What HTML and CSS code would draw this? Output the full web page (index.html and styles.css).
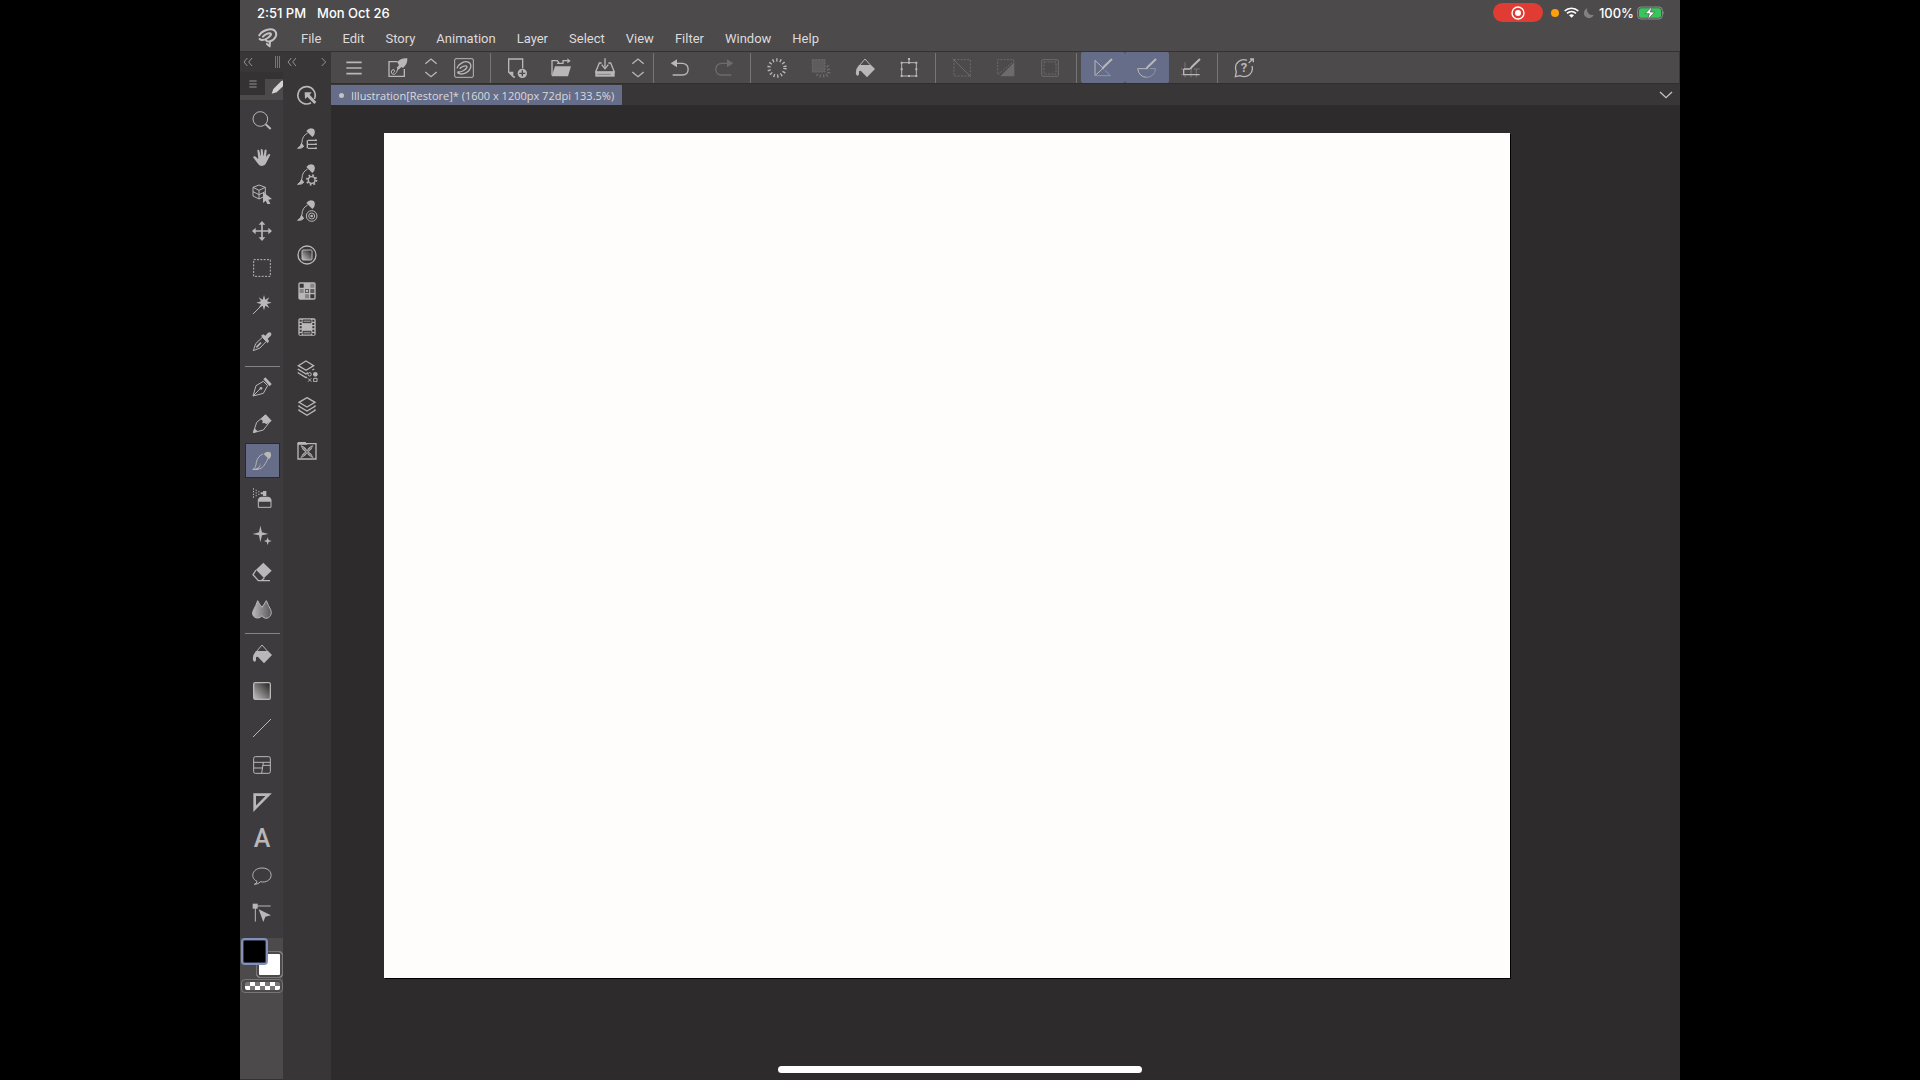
FILE: index.html
```html
<!DOCTYPE html>
<html lang="en">
<head>
  <meta charset="utf-8">
  <meta name="viewport" content="width=device-width, initial-scale=1">
  <title>Illustration[Restore]*</title>
  <link rel="stylesheet" href="styles.css">
</head>
<body>
  <div class="tablet">
    <header>
      <div class="status">
        <span>2:51 PM</span>
        <span>Mon Oct 26</span>
        <div class="status-right">
          <button type="button" class="record" aria-label="Recording">
            <svg viewBox="0 0 42 42" width="14" height="14"><circle cx="21" cy="21" r="18" fill="none" stroke="#fff" stroke-width="4"/><circle cx="21" cy="21" r="9" fill="#fff"/></svg>
          </button>
          <span class="mic-dot"></span>
          <svg viewBox="0 0 45 33" width="15" height="11" fill="none" stroke="#fff" stroke-width="5"><path d="M2 12C13 1 32 1 43 12M9 19c8-7 19-7 27 0"/><path d="M15 25c5-4 10-4 15 0l-7 7z" fill="#fff" stroke="none"/></svg>
          <svg class="moon" viewBox="0 0 30 30" width="10" height="10"><path d="M10 1A15 15 0 1 0 29 20A15 15 0 0 1 10 1z" fill="#828082"/></svg>
          <span class="percent">100%</span>
          <svg viewBox="0 0 84 42" width="28" height="14"><rect x="2" y="3" width="74" height="36" rx="10" fill="none" stroke="#8d8c8d" stroke-width="3"/><rect x="6" y="7" width="66" height="28" rx="6" fill="#35c759"/><path d="M79 15q5 5 0 11z" fill="#8d8c8d"/><path d="M45 1L24 23h13l-5 18 21-23H40z" fill="#fff" stroke="#4c4a4b" stroke-width="2"/></svg>
        </div>
      </div>
      <nav class="menu">
        <button type="button" class="logo" aria-label="Clip Studio">
          <svg viewBox="0 0 60 60" width="20" height="20" fill="none" stroke="#c4c2c3" stroke-width="6" stroke-linecap="round" stroke-linejoin="round"><path d="M4 22C12 7 38-1 49 7c12 11 3 29-13 33-8 2-13-1-12-6M5 33c6 6 16 2 24-3 8-6 13-12 8-14-7-2-18 5-22 10M36 40l-1 15-8-7"/></svg>
        </button>
        <button type="button">File</button>
        <button type="button">Edit</button>
        <button type="button">Story</button>
        <button type="button">Animation</button>
        <button type="button">Layer</button>
        <button type="button">Select</button>
        <button type="button">View</button>
        <button type="button">Filter</button>
        <button type="button">Window</button>
        <button type="button">Help</button>
      </nav>
    </header>

    <div class="app">
      <aside class="tools">
        <div class="dock-bar">
          <button type="button" aria-label="Collapse"><svg viewBox="0 0 30 30" width="10" height="10"><path d="M13 3L3 15l10 12M27 3L17 15l10 12"/></svg></button>
          <span class="grip"></span>
        </div>
        <div class="tool-tabs">
          <button type="button" class="tab-menu" aria-label="Palette menu"><svg viewBox="0 0 24 24" width="8" height="8"><path d="M1 3h22M1 12h22M1 21h22"/></svg></button>
          <button type="button" class="tab-tool" aria-label="Tool">
            <svg viewBox="0 0 36 42" width="12" height="14"><path d="M2 41l5-14L31 3l8-3v16L17 37z" fill="#d4d2d3"/></svg>
          </button>
        </div>

        <div class="tool-list">
          <button type="button" aria-label="Zoom"><svg viewBox="0 0 60 60"><circle cx="25" cy="27" r="22"/><path d="M41 43l15 14" stroke-width="6"/></svg></button>
          <button type="button" aria-label="Hand"><svg viewBox="0 0 60 60"><path class="solid" d="M16 9q4-2 6 2l4 15h1l-1-18q3-4 6 0l2 18h1l3-17q4-3 6 1l-2 20 7-8q5-2 6 1L42 49q-3 8-12 8-8 0-12-7L4 32q-1-5 5-4l10 8z"/></svg></button>
          <button type="button" aria-label="Object"><svg viewBox="0 0 60 60"><path d="M21 3L40 10v26L21 45 3 36V10zM3 10l18 9 19-9M21 19v26M3 23l18 9 19-9"/><path class="solid" d="M33 24l27 21-11 2 6 12-8 3-6-12-8 7z" stroke="#3d3b3e" stroke-width="2"/></svg></button>
          <button type="button" aria-label="Move layer"><svg viewBox="0 0 60 60"><path d="M30 6v48M6 30h48" stroke-width="5"/><path class="solid" d="M30 0l10 11H20zM30 60l10-11H20zM0 30l11-10v20zM60 30L49 20v20z"/></svg></button>
          <button type="button" aria-label="Selection area"><svg viewBox="0 0 60 60"><rect x="5" y="5" width="50" height="50" stroke-dasharray="6 4"/></svg></button>
          <button type="button" aria-label="Auto select"><svg viewBox="0 0 60 60"><path d="M3 57l26-26"/><path class="solid" d="M36 0l4 14 12-7-7 12 14 4-14 4 7 12-12-7-4 14-4-14-12 7 7-12-14-4 14-4-7-12 12 7z"/></svg></button>
          <button type="button" aria-label="Eyedropper"><svg viewBox="0 0 60 60"><path d="M4 56l7-21 20-19 12 12-19 20z"/><path d="M13 46l14-14" stroke-width="5"/><path class="solid" d="M27 11l7-4 6 4 8-9q7-3 10 3 1 5-3 8l-8 7 4 7-4 7z"/></svg></button>
          <hr>
          <button type="button" aria-label="Pen"><svg viewBox="0 0 60 60"><path d="M3 57l9-31 22-13 13 13-13 23zM4 56l22-22"/><circle class="solid" cx="27" cy="34" r="4"/><path class="solid" d="M34 7l6-6 19 20-6 7z"/></svg></button>
          <button type="button" aria-label="Pencil"><svg viewBox="0 0 60 60"><path d="M4 56l10-31 25-21 17 16-22 28z"/><path class="solid" d="M41 1l18 19-16 11-5-4-7 1 1-8-6-4zM3 57l4-15 10 10z"/></svg></button>
          <button type="button" class="active" aria-label="Brush" aria-pressed="true"><svg viewBox="0 0 60 60"><path d="M33 9C20 14 13 26 12 41 10 49 7 53 2 55c16 3 29-3 35-13 4-7 9-12 10-20"/><path class="solid" d="M35 9q9-10 20-5 6 13-4 21zM3 55l15-5q7-5 10-17-4 20-14 24z"/></svg></button>
          <button type="button" aria-label="Airbrush"><svg viewBox="0 0 60 60"><path d="M3 3h3M3 11h3M3 19h3M3 27h3M11 7h3M11 15h3M11 23h3M19 11h3M19 19h3" stroke-width="4"/><path class="solid" d="M33 9h10v15H33zM26 13h7v6h-7zM17 41q0-15 13-15h16q13 0 13 15z"/><path d="M19 41v17h38V41"/></svg></button>
          <button type="button" aria-label="Decoration"><svg viewBox="0 0 60 60"><path class="solid" d="M25 2l5 20 19 5-19 4-5 21-4-21-19-4 19-5zM47 37l3 8 9 3-9 3-3 9-3-9-8-3 8-3z"/></svg></button>
          <button type="button" aria-label="Eraser"><svg viewBox="0 0 60 60"><path class="solid" d="M34 2l25 24-23 22-24-25z"/><path d="M12 24L3 38l16 18h9l9-8M22 56h32" stroke-width="4"/></svg></button>
          <button type="button" aria-label="Blend"><svg viewBox="0 0 60 60"><defs><linearGradient id="drop"><stop offset="0" stop-color="#b9b7b8"/><stop offset="1" stop-color="#5a585a"/></linearGradient></defs><path d="M17 5q6 12 13 20Q37 15 43 5q6 15 13 27c7 17-8 31-20 24q-6-3-6-6-4 8-14 7C3 56-1 45 4 34q8-14 13-29z" fill="url(#drop)"/></svg></button>
          <hr>
          <button type="button" aria-label="Fill"><svg viewBox="0 0 60 60"><path d="M14 22L30 3l16 18"/><path class="solid" d="M12 21h36l12 12-24 25-18-19q-5-2-6 2v8q-2 7-8 2-5-15 8-30z"/></svg></button>
          <button type="button" aria-label="Gradient"><svg viewBox="0 0 60 60"><defs><linearGradient id="grad" x1="0" y1="1" x2="1" y2="0"><stop offset="0" stop-color="#c4c2c3"/><stop offset="1" stop-color="#201e1f"/></linearGradient></defs><rect x="5" y="5" width="50" height="50" rx="5" fill="url(#grad)" stroke-width="4"/></svg></button>
          <button type="button" aria-label="Figure"><svg viewBox="0 0 60 60"><path d="M3 57L57 3"/></svg></button>
          <button type="button" aria-label="Frame border"><svg viewBox="0 0 60 60"><rect x="5" y="5" width="50" height="50" rx="5"/><path d="M5 22h50M34 22l-5 33M5 39h27M33 31h22"/></svg></button>
          <button type="button" aria-label="Ruler"><svg viewBox="0 0 60 60"><path d="M8 8h42L8 50z" stroke-width="8"/></svg></button>
          <button type="button" class="text-tool" aria-label="Text">A</button>
          <button type="button" aria-label="Balloon"><svg viewBox="0 0 60 60"><path d="M15 46C-8 35 2 6 30 6c36 0 36 42 2 42l-6-1q-7 8-19 8 8-2 8-9z"/></svg></button>
          <button type="button" aria-label="Correct line"><svg viewBox="0 0 60 60"><path class="solid" d="M2 2h15v15H2z"/><path d="M15 9h41M10 15v41"/><path class="solid" d="M20 19l37 18-17 4-6 16z"/></svg></button>
        </div>

        <div class="colors">
          <div class="swatches">
            <button type="button" class="sub-color" aria-label="Sub color"></button>
            <button type="button" class="main-color" aria-label="Main color"></button>
          </div>
          <button type="button" class="transparent" aria-label="Transparent"><span></span></button>
        </div>
      </aside>

      <aside class="palettes">
        <div class="dock-bar">
          <button type="button" aria-label="Collapse"><svg viewBox="0 0 30 30" width="10" height="10"><path d="M13 3L3 15l10 12M27 3L17 15l10 12"/></svg></button>
          <button type="button" aria-label="Expand"><svg viewBox="0 0 30 30" width="10" height="10"><path d="M14 3l12 12-12 12"/></svg></button>
        </div>
        <div class="palette-list">
          <div>
            <button type="button" aria-label="Quick access"><svg viewBox="0 0 60 60"><path d="M52 42A26 26 0 1 0 42 53" stroke-width="5"/><path class="solid" d="M23 22h21l-6 7 20 22-6 6-21-21-7 6z"/></svg></button>
          </div>
          <div>
            <button type="button" aria-label="Sub tool"><svg viewBox="0 0 66 66" class="wide"><path d="M35 15Q18 24 18 43q-3 12-13 18 15 1 19-7"/><path class="solid" d="M31 9q10-13 23-5 7 13-5 23zM3 61q13-4 13-18l7 10q-5 9-20 8z"/><path d="M36 37h24M36 49h24M36 61h24M34 37v24" stroke-width="4"/><circle class="solid" cx="60" cy="37" r="3"/><circle class="solid" cx="60" cy="49" r="3"/><circle class="solid" cx="60" cy="61" r="3"/></svg></button>
            <button type="button" aria-label="Tool property"><svg viewBox="0 0 66 66" class="wide"><path d="M35 15Q18 24 18 43q-3 12-13 18 15 1 19-7"/><path class="solid" d="M31 9q10-13 23-5 7 13-5 23zM3 61q13-4 13-18l7 10q-5 9-20 8z"/><circle cx="47" cy="48" r="10" stroke-width="4"/><circle cx="47" cy="48" r="14" stroke-width="6" stroke-dasharray="5 6"/></svg></button>
            <button type="button" aria-label="Brush size"><svg viewBox="0 0 66 66" class="wide"><path d="M35 15Q18 24 18 43q-3 12-13 18 15 1 19-7"/><path class="solid" d="M31 9q10-13 23-5 7 13-5 23zM3 61q13-4 13-18l7 10q-5 9-20 8z"/><circle cx="47" cy="48" r="16" fill="#383637"/><circle cx="47" cy="48" r="9"/><circle class="solid" cx="47" cy="48" r="4"/></svg></button>
          </div>
          <div>
            <button type="button" aria-label="Color wheel"><svg viewBox="0 0 60 60"><circle cx="30" cy="30" r="27" stroke-width="4"/><rect x="15" y="15" width="30" height="30" rx="3" fill="url(#grad)"/></svg></button>
            <button type="button" aria-label="Color set"><svg viewBox="0 0 60 60"><rect class="solid" x="4" y="4" width="52" height="52" rx="5"/><path d="M8 8h12v12H8zM40 40h12v12H40z" fill="#383637" stroke="none"/><path d="M40 8h12v12H40zM8 24h12v12H8zM24 40h12v12H24z" fill="#858384" stroke="none"/><path d="M24 24h12v12H24zM40 24h12v12H40z" fill="#5c5a5b" stroke="none"/><path class="solid" d="M27 27h6v6h-6z"/></svg></button>
            <button type="button" aria-label="Timeline"><svg viewBox="0 0 60 60"><rect class="solid" x="4" y="4" width="52" height="52" rx="5"/><path d="M11 8v46M49 8v46" stroke="#383637" stroke-width="6" stroke-dasharray="6 4"/><path d="M18 9h24v8H18zM18 43h24v8H18z" fill="#858384" stroke="#383637"/></svg></button>
          </div>
          <div>
            <button type="button" aria-label="Layer property"><svg viewBox="0 0 66 66" class="wide"><path d="M30 3l23 14-23 14L7 17zM7 26v2l23 14 6-4M53 26v2l-4 2M7 37v2l23 14 3-2" stroke-width="4"/><circle cx="41" cy="43" r="5"/><circle class="solid" cx="58" cy="43" r="7"/><path d="M36 55l10 10M46 55L36 65M53 55h10v10H53z"/></svg></button>
            <button type="button" aria-label="Layer"><svg viewBox="0 0 60 60"><path d="M30 2l24 14-24 14L6 16zM6 25v3l24 14 24-14v-3M6 37v3l24 15 24-15v-3" stroke-width="4"/></svg></button>
          </div>
          <div>
            <button type="button" aria-label="Material"><svg viewBox="0 0 60 60"><path d="M3 8h54v46H3z" stroke-width="4"/><path class="solid" d="M2 3h24l5 8H2z"/><path class="solid" d="M11 13q14 4 19 15 5-11 19-15-3 12-14 19 11 6 15 19-15-4-20-15-5 11-20 15 4-13 15-19-10-5-14-19z"/><path d="M15 17l30 30M45 17L15 47" stroke="#383637" stroke-width="2"/></svg></button>
          </div>
        </div>
      </aside>

      <main>
        <div class="command-bar">
          <button type="button" aria-label="Menu"><svg viewBox="0 0 60 60"><path d="M7 13h46M7 30h46M7 47h46" stroke-width="5"/></svg></button>
          <button type="button" aria-label="Brush settings"><svg viewBox="0 0 60 60"><path d="M29 11H3v44h46V33" stroke-width="4"/><path class="solid" d="M28 13q10-14 30-12 1 18-13 29l-5-3-8 8-6-6 7-7z"/><path d="M31 27q-4 20-12 22-9 1-9-7 0-8 8-7 5 5-2 9"/></svg></button>
          <button type="button" class="arrows" aria-label="Switch brush"><svg viewBox="0 0 60 60"><path d="M13 17L30 3l17 14M13 42l17 14 17-14" stroke-width="4"/></svg></button>
          <button type="button" aria-label="Clip Studio"><svg viewBox="0 0 60 60"><rect x="2" y="2" width="56" height="56" rx="4"/><path d="M9 31C13 17 33 7 44 13c12 7 6 24-7 31-11 6-26 5-26-3M11 41c4 2 9 1 15-2 9-5 17-12 11-15-6-2-16 4-20 8" stroke-width="4"/></svg></button>
          <span class="sep"></span>
          <button type="button" aria-label="New"><svg viewBox="0 0 60 60"><path d="M24 57h-4L5 43V3h42v28" stroke-width="4"/><path class="solid" d="M5 41h14v15z"/><circle class="solid" cx="46" cy="46" r="14"/><path d="M46 37v18M37 46h18" stroke="#4c4a4b" stroke-width="4"/></svg></button>
          <button type="button" aria-label="Open"><svg viewBox="0 0 60 60"><path d="M3 52V8h16l6 8h9M25 16h-7M36 18V8h14" stroke-width="4"/><path class="solid" d="M49 1l10 8-10 7zM12 25h48l-9 30H2z"/></svg></button>
          <button type="button" aria-label="Save"><svg viewBox="0 0 60 60"><path d="M20 15H13L2 42h56L47 15h-7M30 1v25M20 20l10 12 10-12" stroke-width="4"/><path class="solid" d="M1 41h58v15H1z"/><path d="M7 49h40" stroke="#858384"/></svg></button>
          <button type="button" class="arrows" aria-label="Save options"><svg viewBox="0 0 60 60"><path d="M13 17L30 3l17 14M13 42l17 14 17-14" stroke-width="4"/></svg></button>
          <span class="sep"></span>
          <button type="button" aria-label="Undo"><svg viewBox="0 0 60 60"><path d="M14 16h24c22 3 22 34-1 35H8" stroke-width="4"/><path class="solid" d="M2 16L21 4v24z"/></svg></button>
          <button type="button" disabled aria-label="Redo"><svg viewBox="0 0 60 60"><path d="M46 16H22C0 19 0 50 23 51h29" stroke-width="4"/><path class="solid" d="M58 16L39 4v24z"/></svg></button>
          <span class="sep"></span>
          <button type="button" aria-label="Clear"><svg viewBox="0 0 60 60"><circle cx="30" cy="30" r="24" stroke-width="10" stroke-dasharray="4 7"/></svg></button>
          <button type="button" disabled aria-label="Clear outside selection"><svg viewBox="0 0 60 60"><rect x="4" y="5" width="38" height="37" fill="#8a8889" stroke-dasharray="6 3"/><path d="M48 36l9-3M48 43l10 2M44 48l7 8M37 49l2 10M29 49l-2 9M21 48l-5 5M47 28l6-6" stroke-width="4"/></svg></button>
          <button type="button" aria-label="Fill"><svg viewBox="0 0 60 60"><path d="M14 22L30 3l16 18"/><path class="solid" d="M12 21h36l12 12-24 25-18-19q-5-2-6 2v8q-2 7-8 2-5-15 8-30z"/></svg></button>
          <button type="button" aria-label="Scale and rotate"><svg viewBox="0 0 60 60"><path d="M8 14h44v40H8zM30 1v13"/><path d="M5 14h6M49 14h6M5 54h6M49 54h6M27 3h6M27 14h6M27 54h6M5 34h6M49 34h6" stroke-width="6"/></svg></button>
          <span class="sep"></span>
          <button type="button" disabled aria-label="Deselect"><svg viewBox="0 0 60 60"><rect x="6" y="5" width="49" height="49" stroke-dasharray="6 4"/><path d="M2 2l55 55"/></svg></button>
          <button type="button" disabled aria-label="Invert selection"><svg viewBox="0 0 60 60"><path d="M5 47V5h48v7M6 50L52 10" stroke-dasharray="6 4"/><path class="solid" d="M55 12v43H13z"/></svg></button>
          <button type="button" disabled aria-label="Show selection border"><svg viewBox="0 0 60 60"><rect x="5" y="5" width="50" height="50" rx="4"/><rect x="12" y="12" width="36" height="36" stroke-dasharray="6 4"/></svg></button>
          <span class="sep"></span>
          <button type="button" class="active" aria-label="Snap to ruler" aria-pressed="true"><svg viewBox="0 0 60 60"><path d="M30 30L6 7v46l24-22"/><path d="M6 53h46L36 37" stroke="#9096a8"/><path d="M28 33l5-7L57 3" stroke-width="6"/></svg></button>
          <button type="button" class="active" aria-label="Snap to special ruler" aria-pressed="true"><svg viewBox="0 0 60 60"><path d="M28 32H2q4 25 27 26" stroke-width="3"/><path d="M29 58q23-1 27-26H39" stroke="#9096a8"/><path d="M28 33l5-7L57 3" stroke-width="6"/></svg></button>
          <button type="button" aria-label="Snap to grid"><svg viewBox="0 0 60 60"><path d="M0 33h26M0 50h8M12 13v20M30 33v25M46 33v25M38 33h18M12 50v8" stroke="#777576"/><path d="M8 33v17h48M9 33h18" stroke-width="4"/><path d="M28 33l5-7L57 3" stroke-width="6"/></svg></button>
          <span class="sep"></span>
          <button type="button" class="help" aria-label="Support"><svg viewBox="0 0 60 60"><path d="M39 7C20 0 2 15 5 34l2 8-3 14 14-3c22 10 42-8 36-29M44 15L56 4M48 3h10v10" stroke-width="4"/></svg><span>?</span></button>
        </div>
        <div class="tab-bar">
          <button type="button" class="doc-tab"><span class="unsaved"></span>Illustration[Restore]* (1600 x 1200px 72dpi 133.5%)</button>
          <button type="button" class="tab-more" aria-label="More tabs"><svg viewBox="0 0 42 24" width="14" height="8"><path d="M3 3l18 17L39 3" fill="none" stroke="#c4c2c3" stroke-width="4"/></svg></button>
        </div>
        <div class="workspace">
          <canvas></canvas>
        </div>
      </main>
    </div>
    <div class="home"></div>
  </div>
</body>
</html>
```

FILE: styles.css
```css
* {
  box-sizing: border-box;
}
body {
  margin: 0;
  background: #000;
  font-family: Roboto, "Liberation Sans", sans-serif;
}
button {
  display: flex;
  align-items: center;
  justify-content: center;
  margin: 0;
  padding: 0;
  border: none;
  background: none;
  color: #dcdadb;
  font: inherit;
  cursor: pointer;
}
svg {
  display: block;
  flex: none;
}

/* 4:3 tablet screen */
.tablet {
  position: relative;
  display: flex;
  flex-direction: column;
  height: 100vh;
  aspect-ratio: 4 / 3;
  margin: 0 auto;
  background: #2d2b2c;
  overflow: hidden;
}
header {
  background: #4c4a4b;
  border-bottom: 1px solid #343233;
}
.status {
  display: flex;
  align-items: center;
  gap: 11px;
  height: 25px;
  padding: 0 15px 0 17px;
  color: #fff;
  font-family: Inter, sans-serif;
  font-size: 13px;
  font-weight: 500;
}
.status-right {
  display: flex;
  align-items: center;
  gap: 5px;
  margin-left: auto;
}
.record {
  width: 50px;
  height: 19px;
  margin-right: 3px;
  border-radius: 10px;
  background: #e03c33;
}
.mic-dot {
  width: 8px;
  height: 8px;
  border-radius: 50%;
  background: #ff9f0a;
}
.percent {
  margin: 0 -2px 0 0;
}
.menu {
  display: flex;
  gap: 1px;
  height: 26px;
  font-size: 13px;
}
.menu button {
  padding: 0 10px;
}
.menu .logo {
  padding: 0 12px 0 18px;
}

.app {
  display: flex;
  flex: 1;
  min-height: 0;
}
.dock-bar {
  display: flex;
  align-items: center;
  justify-content: space-between;
  height: 20px;
  padding: 0 3px;
}
.dock-bar svg,
.tab-menu svg {
  fill: none;
  stroke: #949293;
  stroke-width: 3;
}
.grip {
  width: 5px;
  height: 12px;
  border: 1px solid #777576;
  border-width: 0 1px;
  background: linear-gradient(90deg, transparent 1px, #777576 1px, #777576 2px, transparent 2px);
}

/* tool and palette icons */
.tool-list svg,
.palette-list svg,
.command-bar svg {
  width: 20px;
  height: 20px;
  fill: none;
  stroke: #b9b7b8;
  stroke-width: 3;
}
.palette-list .wide {
  width: 22px;
  height: 22px;
}
.solid {
  fill: #b9b7b8;
  stroke: none;
}

.tools {
  display: flex;
  flex-direction: column;
  width: 43px;
  background: #3d3b3e;
}
.tools .dock-bar,
.palettes .dock-bar {
  background: #383637;
}
.tool-tabs {
  display: flex;
  align-items: stretch;
  height: 28px;
  border-bottom: 5px solid #4c4a4b;
  background: #343233;
}
.tab-menu {
  width: 25px;
}
.tab-tool {
  flex: 1;
  margin-top: 7px;
  background: #4c4a4b;
  justify-content: flex-end;
}
.tool-list {
  display: flex;
  flex-direction: column;
  align-items: center;
  padding: 1px 0 7px 1px;
}
.tool-list button {
  width: 35px;
  height: 35px;
  margin: 1px 0;
}
.tool-list hr {
  width: 35px;
  height: 1px;
  margin: 6px 0 1px;
  border: none;
  background: #858384;
}
.tool-list .active {
  border: 1px solid #252a39;
  background: #656d88;
}
.text-tool {
  color: #b9b7b8;
  font-size: 25px;
  font-weight: 500;
}

.colors {
  flex: 1;
  padding: 0 0 0 1px;
  border-bottom: 1px solid #343233;
  background: #4c4a4b;
}
.swatches {
  position: relative;
  height: 41px;
}
.main-color,
.sub-color {
  position: absolute;
  width: 27px;
  height: 27px;
  border-radius: 4px;
}
.main-color {
  top: 0;
  left: 0;
  border: 2px solid #8290ba;
  background: #000;
  box-shadow: inset 0 0 0 1px #343c55;
}
.sub-color {
  right: 0;
  bottom: 1px;
  border: 1px solid #777576;
  background: #fff;
  box-shadow: inset 0 0 0 2px #4c4a4b;
}
.transparent {
  width: 100%;
  height: 14px;
  border: 1px solid #777576;
  border-radius: 4px;
}
.transparent span {
  width: 35px;
  height: 8px;
  border-radius: 2px;
  background: repeating-conic-gradient(#fff 0 25%, #777576 0 50%) 0 0 / 10px 8px;
}

.palettes {
  width: 48px;
  background: #383637;
}
.palettes .dock-bar {
  padding: 0 4px;
}
.palette-list {
  display: flex;
  flex-direction: column;
  gap: 8px;
  padding-top: 5px;
}
.palette-list button {
  width: 48px;
  height: 36px;
}

main {
  display: flex;
  flex: 1;
  flex-direction: column;
  min-width: 0;
}
.command-bar {
  display: flex;
  height: 32px;
  padding-left: 1px;
  border-right: 1px solid #383637;
  border-bottom: 1px solid #302e2f;
  background: #4c4a4b;
}
.command-bar button {
  width: 44px;
}
.command-bar .arrows {
  width: 22px;
}
.command-bar .active {
  border-radius: 2px;
  background: #656d88;
}
.command-bar button:disabled {
  opacity: 0.3;
}
.sep {
  width: 1px;
  margin: 1px 4px 0;
  background: #777576;
}
.help {
  display: grid;
  place-content: center;
}
.help > * {
  grid-area: 1 / 1;
}
.help span {
  color: #b9b7b8;
  font-size: 13px;
  font-weight: 700;
  line-height: 20px;
}
.tab-bar {
  display: flex;
  justify-content: space-between;
  padding-top: 1px;
  background: #383637;
}
.doc-tab {
  height: 20px;
  padding: 0 8px;
  background: #656d88;
  font-family: "Open Sans", sans-serif;
  font-size: 11px;
}
.unsaved {
  width: 5px;
  height: 5px;
  margin-right: 7px;
  border-radius: 50%;
  background: #c4c2c3;
}
.tab-more {
  padding: 0 7px;
}
.workspace {
  display: flex;
  flex: 1;
  min-height: 0;
  padding: 28px 170px 102px 53px;
}
canvas {
  flex: 1;
  min-width: 0;
  height: 100%;
  background: #fefdfc;
  box-shadow: 1px 1px #000;
}

/* home indicator lies over the workspace */
.home {
  position: absolute;
  bottom: 7px;
  left: 50%;
  width: 364px;
  height: 7px;
  margin-left: -182px;
  border-radius: 4px;
  background: #fff;
}
```
